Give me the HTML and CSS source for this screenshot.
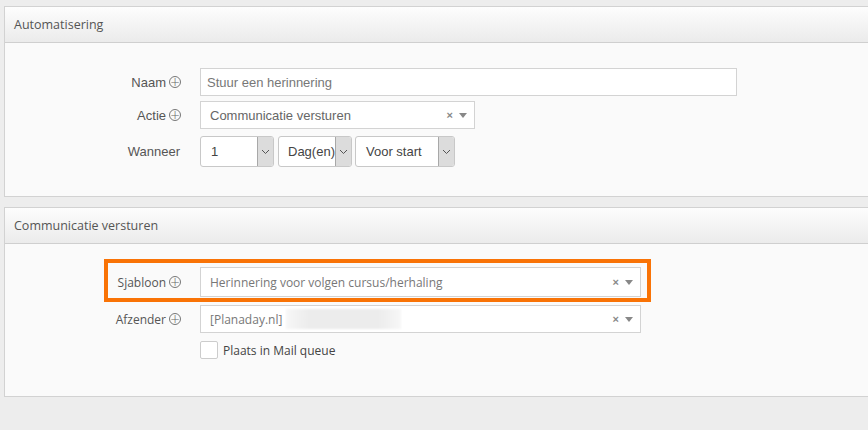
FILE: index.html
```html
<!DOCTYPE html>
<html lang="nl">
<head>
  <meta charset="UTF-8">
  <title>Automatisering</title>
  <link rel="stylesheet" href="styles.css">
</head>
<body>
  <div class="panel panel-auto">
    <div class="panel-heading">Automatisering</div>
    <div class="panel-body">
      <div class="form-row row-naam">
        <label class="lbl">Naam <span class="plus">+</span></label>
        <div class="field"><input class="text-input" type="text" value="Stuur een herinnering"></div>
      </div>
      <div class="form-row row-actie">
        <label class="lbl">Actie <span class="plus">+</span></label>
        <div class="field">
          <div class="chosen chosen-actie">
            <span class="chosen-text">Communicatie versturen</span>
            <span class="chosen-x">×</span>
            <span class="chosen-arrow"></span>
          </div>
        </div>
      </div>
      <div class="form-row row-wanneer">
        <label class="lbl lbl-plain">Wanneer</label>
        <div class="field selects">
          <div class="native sel-num"><span class="native-text">1</span><span class="native-btn"><svg width="9" height="6" viewBox="0 0 9 6"><polyline points="1 1 4.5 4.5 8 1" fill="none" stroke="#555" stroke-width="1"/></svg></span></div>
          <div class="native sel-unit"><span class="native-text">Dag(en)</span><span class="native-btn"><svg width="9" height="6" viewBox="0 0 9 6"><polyline points="1 1 4.5 4.5 8 1" fill="none" stroke="#555" stroke-width="1"/></svg></span></div>
          <div class="native sel-when"><span class="native-text">Voor start</span><span class="native-btn"><svg width="9" height="6" viewBox="0 0 9 6"><polyline points="1 1 4.5 4.5 8 1" fill="none" stroke="#555" stroke-width="1"/></svg></span></div>
        </div>
      </div>
    </div>
  </div>

  <div class="panel panel-comm">
    <div class="panel-heading">Communicatie versturen</div>
    <div class="panel-body">
      <div class="form-row row-sjabloon">
        <div class="highlight"></div>
        <label class="lbl lbl-os">Sjabloon <span class="plus">+</span></label>
        <div class="field">
          <div class="chosen chosen-wide">
            <span class="chosen-text os">Herinnering voor volgen cursus/herhaling</span>
            <span class="chosen-x">×</span>
            <span class="chosen-arrow"></span>
          </div>
        </div>
      </div>
      <div class="form-row row-afzender">
        <label class="lbl lbl-os">Afzender <span class="plus">+</span></label>
        <div class="field">
          <div class="chosen chosen-wide">
            <span class="chosen-text os">[Planaday.nl]</span>
            <span class="blurred"></span>
            <span class="chosen-x">×</span>
            <span class="chosen-arrow"></span>
          </div>
        </div>
      </div>
      <div class="form-row row-check">
        <span></span>
        <div class="field check-field">
          <span class="checkbox"></span>
          <span class="check-label">Plaats in Mail queue</span>
        </div>
      </div>
    </div>
  </div>
</body>
</html>
```

FILE: styles.css
```css
* {
  box-sizing: border-box;
  margin: 0;
  padding: 0;
}

body {
  background-color: #ededed;
  font-family: 'Liberation Sans', Arial, sans-serif;
  color: #555;
  overflow: hidden;
  width: 868px;
  height: 430px;
  padding-top: 6px;
}

.panel {
  margin-left: 4px;
  width: 880px;
  border: 1px solid #d2d2d2;
  border-right: none;
  background-color: #fafafa;
}

.panel-comm {
  margin-top: 10px;
}

.panel-heading {
  height: 36px;
  line-height: 35px;
  padding-left: 9px;
  font-family: 'Open Sans', sans-serif;
  font-size: 12.5px;
  color: #555;
  background: linear-gradient(#fdfdfd, #ebebeb);
  border-bottom: 1px solid #cfcfcf;
}

.panel-auto .panel-body {
  height: 153px;
  padding-top: 25px;
}

.panel-comm .panel-body {
  height: 152px;
  padding-top: 23px;
}

.form-row {
  display: grid;
  grid-template-columns: 195px auto;
  align-items: center;
}

.lbl {
  text-align: right;
  padding-right: 19px;
  font-size: 13px;
  color: #555;
  display: flex;
  justify-content: flex-end;
  align-items: center;
  gap: 3px;
}

.lbl-plain {
  padding-right: 20px;
}

.lbl-os {
  font-family: 'Open Sans', sans-serif;
  font-size: 12px;
}

.plus {
  display: inline-flex;
  width: 12px;
  height: 12px;
  border: 1px solid #777;
  border-radius: 50%;
  font-size: 12px;
  line-height: 10px;
  justify-content: center;
  color: #666;
  font-family: 'DejaVu Sans', sans-serif;
  font-weight: 300;
}

.row-naam {
  height: 28px;
}

.row-actie {
  height: 28px;
  margin-top: 5px;
}

.row-wanneer {
  height: 31px;
  margin-top: 7px;
}

.text-input {
  width: 537px;
  height: 28px;
  border: 1px solid #d3d3d3;
  background: #fff;
  padding: 0 6px;
  font-family: 'Liberation Sans', Arial, sans-serif;
  font-size: 13px;
  color: #777;
}

.chosen {
  position: relative;
  height: 28px;
  border: 1px solid #d3d3d3;
  background: #fff;
  display: flex;
  align-items: center;
  padding-left: 9px;
}

.chosen-actie {
  width: 275px;
}

.chosen-wide {
  width: 441px;
}

.chosen-text {
  font-size: 13px;
  color: #666;
}

.chosen-text.os {
  font-family: 'Open Sans', sans-serif;
  font-size: 12px;
  color: #777;
}

.chosen-x {
  margin-left: auto;
  font-size: 11px;
  font-weight: bold;
  color: #888;
}

.chosen-arrow {
  width: 0;
  height: 0;
  margin: 0 7px 0 6px;
  border-left: 4px solid transparent;
  border-right: 4px solid transparent;
  border-top: 5px solid #888;
}

.blurred {
  width: 115px;
  height: 20px;
  margin-left: 4px;
  background: linear-gradient(90deg, #f7f7f7, #ececec 20%, #ececec 80%, #f7f7f7);
  filter: blur(1px);
}

.selects {
  display: flex;
  gap: 4px;
}

.native {
  height: 31px;
  border: 1px solid #c8c8c8;
  border-radius: 3px;
  background: #fff;
  display: flex;
  overflow: hidden;
}

.native-text {
  flex: 1;
  line-height: 29px;
  font-size: 13px;
  color: #444;
}

.native-btn {
  width: 16px;
  background: #dcdcdc;
  border-left: 1px solid #a8a8a8;
  display: flex;
  align-items: center;
  justify-content: center;
}

.sel-num {
  width: 74px;
}

.sel-num .native-text {
  padding-left: 10px;
}

.sel-unit {
  width: 74px;
}

.sel-unit .native-text {
  padding-left: 9px;
}

.sel-when {
  width: 100px;
  margin-left: -1px;
}

.sel-when .native-text {
  padding-left: 10px;
}

.row-sjabloon {
  position: relative;
  height: 30px;
}

.row-sjabloon .chosen {
  height: 30px;
}

.highlight {
  position: absolute;
  left: 99px;
  top: -8px;
  width: 547px;
  height: 43px;
  border: 4px solid #f97306;
}

.row-afzender {
  height: 28px;
  margin-top: 8px;
}

.row-check {
  height: 18px;
  margin-top: 8px;
}

.check-field {
  display: flex;
  align-items: center;
}

.checkbox {
  width: 18px;
  height: 18px;
  border: 1px solid #ccc;
  border-radius: 2px;
  background: #fff;
}

.check-label {
  margin-left: 5px;
  font-family: 'Open Sans', sans-serif;
  font-size: 12px;
  color: #444;
}
```
